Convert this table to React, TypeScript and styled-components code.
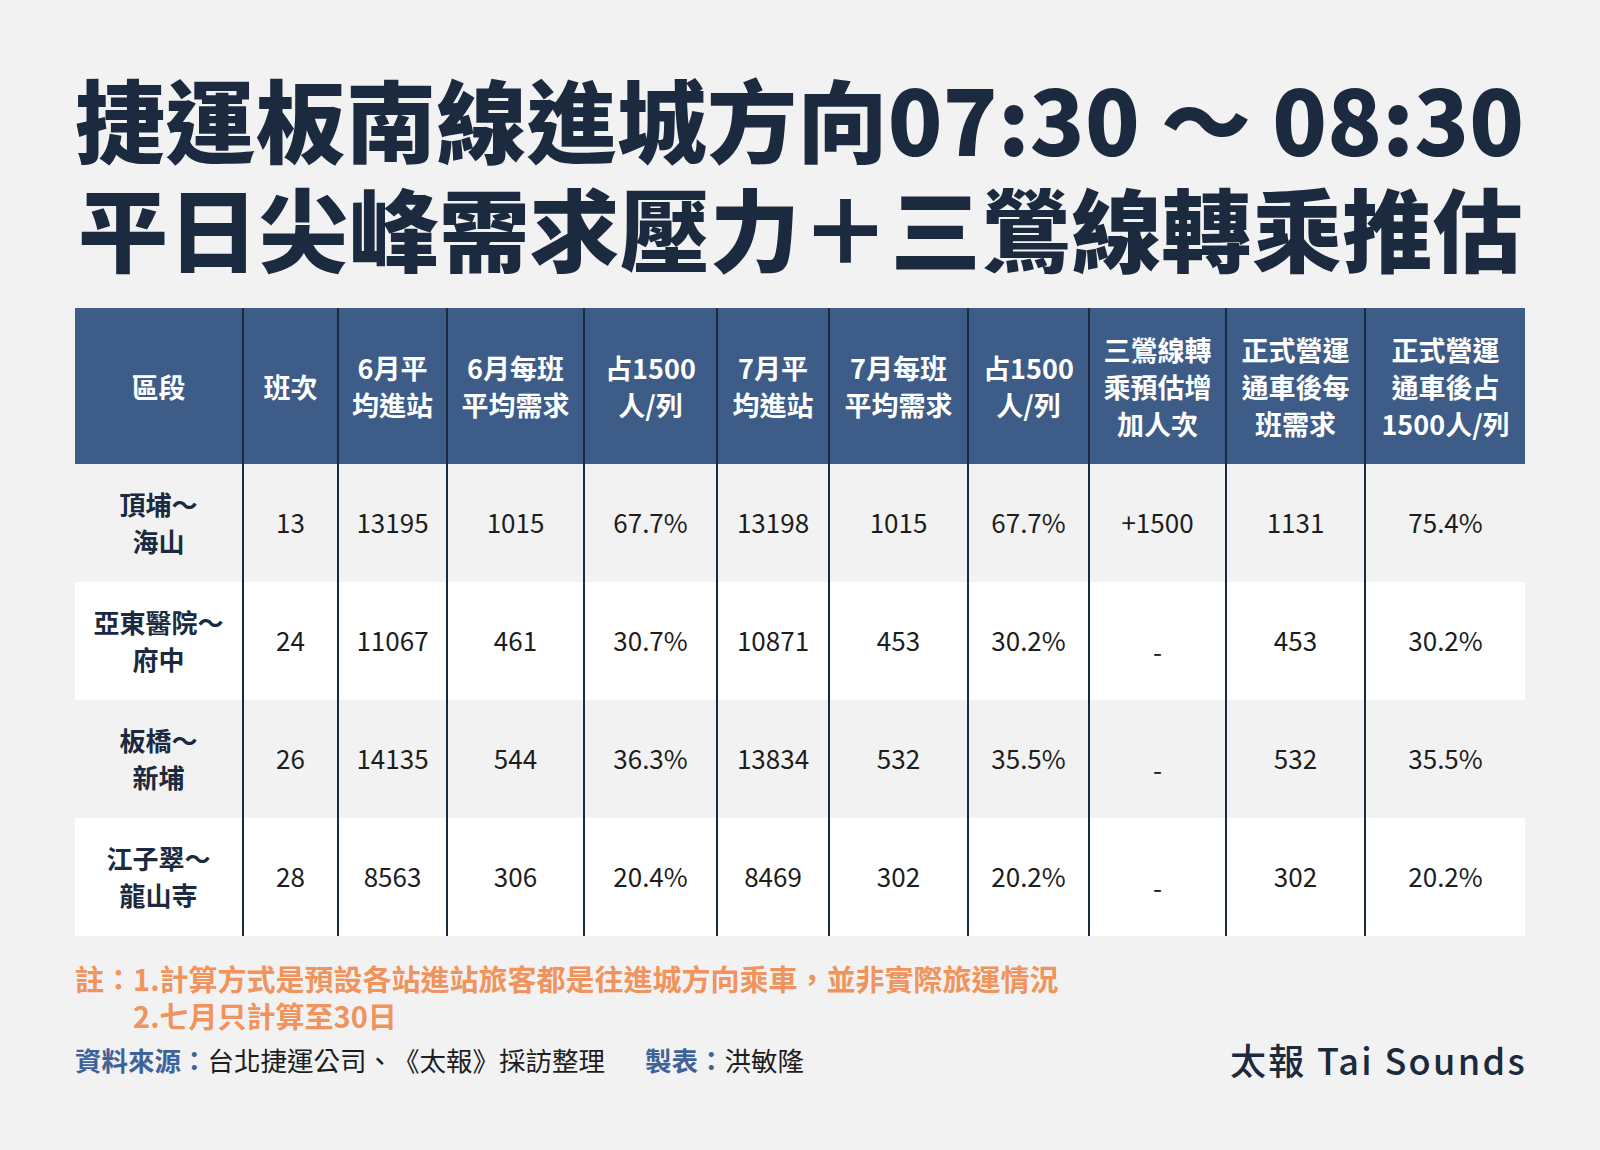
import styled, { createGlobalStyle } from "styled-components";

const GlobalStyle = createGlobalStyle`
  html, body {
    margin: 0;
    padding: 0;
    background: #f2f2f2;
  }
  body {
    font-family: "Noto Sans CJK TC", "Noto Sans", sans-serif;
    text-spacing-trim: space-all;
  }
`;

const NAVY = "#1b2a3e";
const HEADER = "#3d5d88";
const ORANGE = "#f0935c";

const Page = styled.div`
  width: 1600px;
  height: 1150px;
  box-sizing: border-box;
  padding: 63px 75px 0 75px;
  display: flex;
  flex-direction: column;
`;

const Title = styled.h1`
  margin: 0;
  font-size: 90px;
  line-height: 109px;
  font-weight: 900;
  color: ${NAVY};
  letter-spacing: 0.3px;
  white-space: nowrap;
`;

const TitleLine = styled.div<{ indent?: number }>`
  padding-left: ${({ indent }) => indent ?? 0}px;
`;

const Table = styled.div`
  margin-top: 27px;
  width: 1450px;
  display: grid;
  grid-template-columns: 169px 95px 109px 137px 133px 112px 139px 121px 137px 139px 159px;
`;

const HeadCell = styled.div<{ last?: boolean }>`
  height: 156px;
  background: ${HEADER};
  color: #fff;
  font-size: 27px;
  font-weight: 700;
  line-height: 37px;
  display: flex;
  align-items: center;
  justify-content: center;
  text-align: center;
  border-right: ${({ last }) => (last ? "none" : `2px solid ${NAVY}`)};
  box-sizing: border-box;
  white-space: pre-line;
`;

const Cell = styled.div<{ shade: boolean; last?: boolean; label?: boolean }>`
  height: 118px;
  padding-bottom: 3px;
  background: ${({ shade }) => (shade ? "#f2f2f2" : "#ffffff")};
  color: ${({ label }) => (label ? NAVY : "#1d1d1d")};
  font-size: 26px;
  font-weight: ${({ label }) => (label ? 700 : 400)};
  line-height: 37px;
  display: flex;
  align-items: center;
  justify-content: center;
  text-align: center;
  border-right: ${({ last }) => (last ? "none" : `2px solid ${NAVY}`)};
  box-sizing: border-box;
  white-space: pre-line;
`;

const Dash = styled.span`
  display: inline-block;
  transform: translateY(11px);
`;

const Notes = styled.div`
  margin-top: 24px;
  color: ${ORANGE};
  font-size: 29px;
  font-weight: 700;
  line-height: 37px;
  display: flex;
`;

const NoteList = styled.div`
  display: flex;
  flex-direction: column;
`;

const Footer = styled.div`
  margin-top: 5px;
  display: flex;
  align-items: center;
  justify-content: space-between;
`;

const Source = styled.div`
  font-size: 26.5px;
  line-height: 37px;
  color: #1d1d1d;
  display: flex;
  gap: 40px;
`;

const SourceLabel = styled.span`
  color: #3e6399;
  font-weight: 700;
`;

const Logo = styled.div`
  font-size: 36px;
  font-weight: 500;
  color: ${NAVY};
  letter-spacing: 2.3px;
  line-height: 40px;
  margin-right: -2px;
`;

const headers = [
  "區段",
  "班次",
  "6月平\n均進站",
  "6月每班\n平均需求",
  "占1500\n人/列",
  "7月平\n均進站",
  "7月每班\n平均需求",
  "占1500\n人/列",
  "三鶯線轉\n乘預估增\n加人次",
  "正式營運\n通車後每\n班需求",
  "正式營運\n通車後占\n1500人/列",
];

const rows = [
  ["頂埔～\n海山", "13", "13195", "1015", "67.7%", "13198", "1015", "67.7%", "+1500", "1131", "75.4%"],
  ["亞東醫院～\n府中", "24", "11067", "461", "30.7%", "10871", "453", "30.2%", "-", "453", "30.2%"],
  ["板橋～\n新埔", "26", "14135", "544", "36.3%", "13834", "532", "35.5%", "-", "532", "35.5%"],
  ["江子翠～\n龍山寺", "28", "8563", "306", "20.4%", "8469", "302", "20.2%", "-", "302", "20.2%"],
];

export default function App() {
  return (
    <>
      <GlobalStyle />
      <Page>
        <Title>
          <TitleLine>捷運板南線進城方向07:30 ～ 08:30</TitleLine>
          <TitleLine indent={3}>平日尖峰需求壓力＋三鶯線轉乘推估</TitleLine>
        </Title>
        <Table>
          {headers.map((h, i) => (
            <HeadCell key={h + i} last={i === headers.length - 1}>
              {h}
            </HeadCell>
          ))}
          {rows.map((row, r) =>
            row.map((v, c) => (
              <Cell
                key={`${r}-${c}`}
                shade={r % 2 === 0}
                label={c === 0}
                last={c === row.length - 1}
              >
                {v === "-" ? <Dash>-</Dash> : v}
              </Cell>
            ))
          )}
        </Table>
        <Notes>
          <span>註：</span>
          <NoteList>
            <span>1.計算方式是預設各站進站旅客都是往進城方向乘車，並非實際旅運情況</span>
            <span>2.七月只計算至30日</span>
          </NoteList>
        </Notes>
        <Footer>
          <Source>
            <span>
              <SourceLabel>資料來源：</SourceLabel>台北捷運公司、《太報》採訪整理
            </span>
            <span>
              <SourceLabel>製表：</SourceLabel>洪敏隆
            </span>
          </Source>
          <Logo>太報 Tai Sounds</Logo>
        </Footer>
      </Page>
    </>
  );
}
